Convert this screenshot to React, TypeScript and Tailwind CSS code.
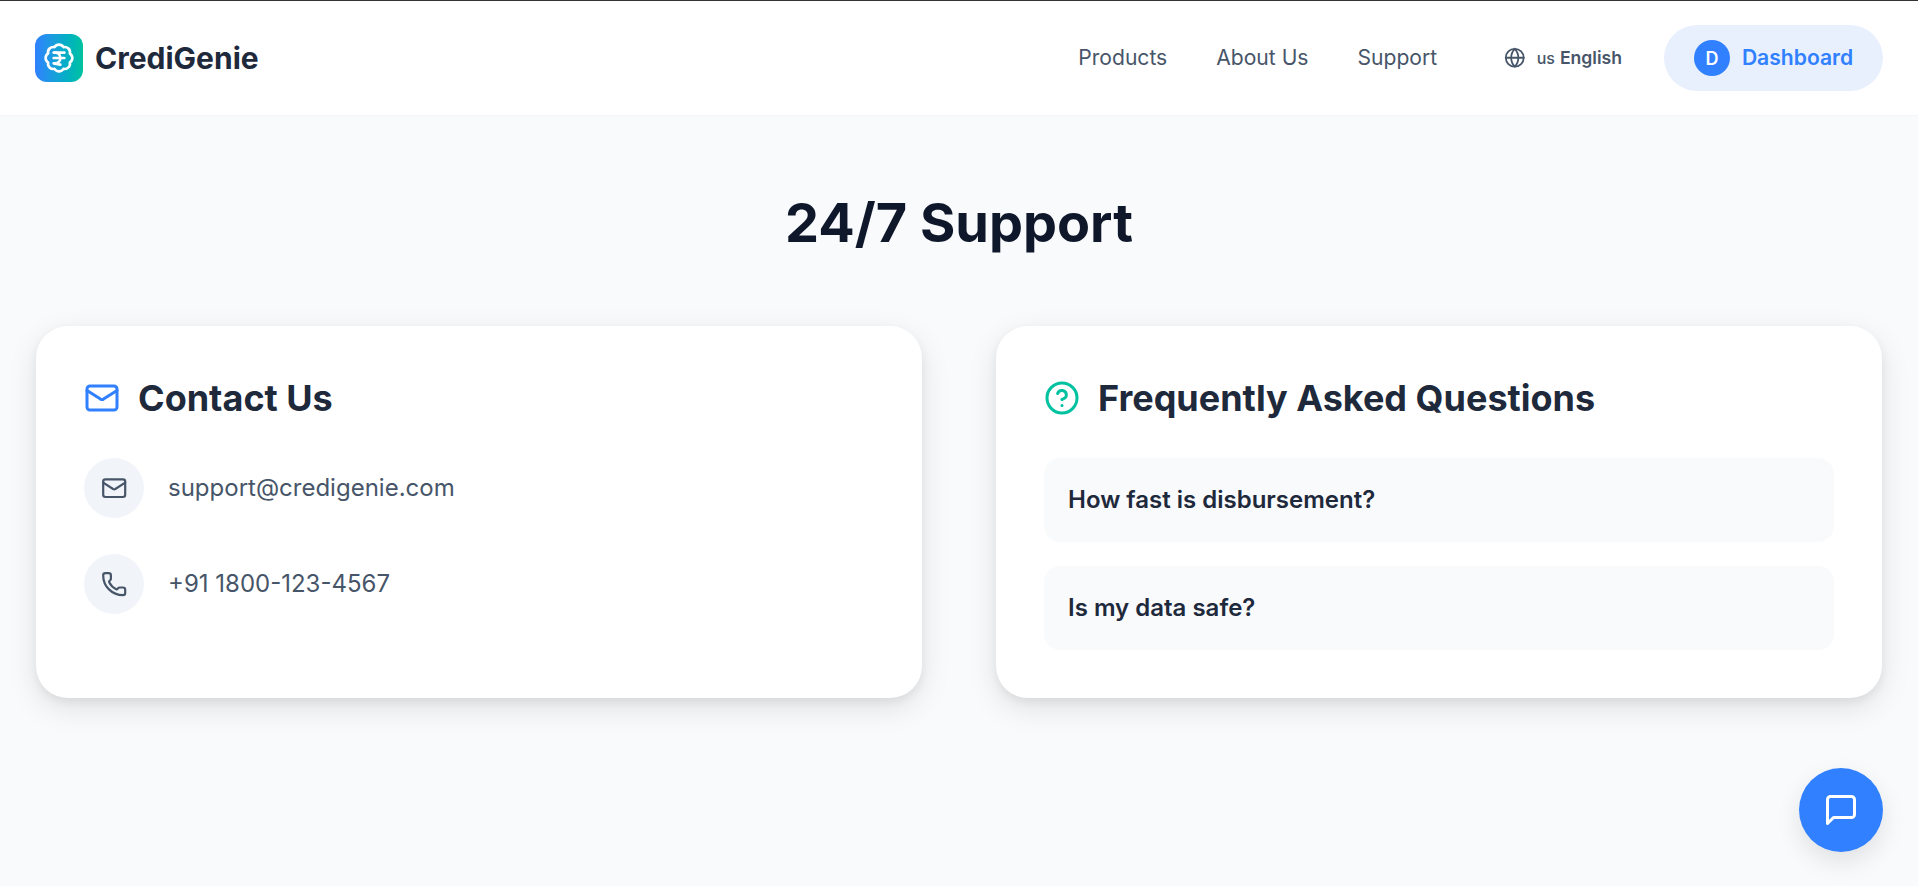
import { BadgeIndianRupee, CircleHelp, Globe, Mail, Phone } from "lucide-react";

export default function App() {
  return (
    <div className="min-h-[886px] bg-[#f9fafc] font-['Inter',sans-serif] border-t border-[#333]">
      {/* Header */}
      <header className="h-[115px] bg-white border-b border-[#f1f5f9] px-[35px] flex items-center justify-between">
        <div className="flex items-center gap-3">
          <div className="w-12 h-12 rounded-xl bg-gradient-to-r from-[#3080ff] to-[#00c2a0] flex items-center justify-center">
            <BadgeIndianRupee className="w-8 h-8 text-white" strokeWidth={2} />
          </div>
          <span className="text-[30px] font-bold text-[#1e293b]">CrediGenie</span>
        </div>
        <nav className="flex items-center">
          <div className="flex items-center gap-[49px] text-[21.1px] text-[#475569]">
            <a>Products</a>
            <a>About Us</a>
            <a>Support</a>
          </div>
          <div className="ml-[67px] flex items-center gap-[11px] text-[#475569] font-semibold">
            <Globe className="w-[21.5px] h-[21.5px]" strokeWidth={2} />
            <span className="flex items-baseline gap-[5px]">
              <span className="text-[16px] font-medium">us</span>
              <span className="text-[17.6px]">English</span>
            </span>
          </div>
          <div className="ml-[42px] h-[66px] w-[219px] rounded-full bg-[#e8f0fe] flex items-center justify-center gap-3">
            <div className="w-9 h-9 rounded-full bg-[#3080ff] text-white text-[18px] font-semibold flex items-center justify-center">D</div>
            <span className="text-[21.1px] font-semibold text-[#3080ff]">Dashboard</span>
          </div>
        </nav>
      </header>

      {/* Main */}
      <main className="px-9">
        <h1 className="mt-[73px] text-center text-[54px] leading-[68px] font-bold text-[#0f172a]">24/7 Support</h1>
        <div className="mt-[69px] grid grid-cols-2 gap-[74px]">
          <section className="h-[372px] bg-white rounded-[32px] p-12 shadow-[0_10px_30px_rgba(0,0,0,0.1),0_4px_10px_rgba(0,0,0,0.06)]">
            <div className="flex items-center gap-[18px] h-[48px]">
              <Mail className="w-[36px] h-[36px] text-[#3080ff]" strokeWidth={2} />
              <h2 className="text-[36px] font-bold text-[#1e293b]">Contact Us</h2>
            </div>
            <div className="mt-[36px] flex flex-col gap-9">
              <div className="flex items-center gap-6">
                <div className="w-[60px] h-[60px] rounded-full bg-[#f1f5f9] flex items-center justify-center">
                  <Mail className="w-[26.4px] h-[26.4px] text-[#475569]" strokeWidth={2} />
                </div>
                <span className="text-[24px] text-[#475569]">support@credigenie.com</span>
              </div>
              <div className="flex items-center gap-6">
                <div className="w-[60px] h-[60px] rounded-full bg-[#f1f5f9] flex items-center justify-center">
                  <Phone className="w-[26.4px] h-[26.4px] text-[#475569]" strokeWidth={2} />
                </div>
                <span className="text-[24px] text-[#475569]">+91 1800-123-4567</span>
              </div>
            </div>
          </section>
          <section className="h-[372px] bg-white rounded-[32px] p-12 shadow-[0_10px_30px_rgba(0,0,0,0.1),0_4px_10px_rgba(0,0,0,0.06)]">
            <div className="flex items-center gap-[18px] h-[48px]">
              <CircleHelp className="w-[36px] h-[36px] text-[#00c2a0]" strokeWidth={2} />
              <h2 className="text-[36px] font-bold text-[#1e293b]">Frequently Asked Questions</h2>
            </div>
            <div className="mt-[36px] flex flex-col gap-6">
              <div className="h-[84px] rounded-2xl bg-[#f8fafc] px-6 flex items-center text-[24px] font-semibold text-[#1e293b]">How fast is disbursement?</div>
              <div className="h-[84px] rounded-2xl bg-[#f8fafc] px-6 flex items-center text-[24px] font-semibold text-[#1e293b]">Is my data safe?</div>
            </div>
          </section>
        </div>
      </main>

      {/* Chat button */}
      <button className="fixed right-[35px] bottom-[34px] w-[84px] h-[84px] rounded-full bg-[#3080ff] flex items-center justify-center shadow-[0_10px_25px_rgba(0,0,0,0.1)]">
        <svg className="w-9 h-9 text-white" viewBox="0 0 24 24" fill="none" stroke="currentColor" strokeWidth={2} strokeLinecap="round" strokeLinejoin="round">
          <path d="M21 15a2 2 0 0 1-2 2H7l-4 4V5a2 2 0 0 1 2-2h14a2 2 0 0 1 2 2z" />
        </svg>
      </button>
    </div>
  );
}
